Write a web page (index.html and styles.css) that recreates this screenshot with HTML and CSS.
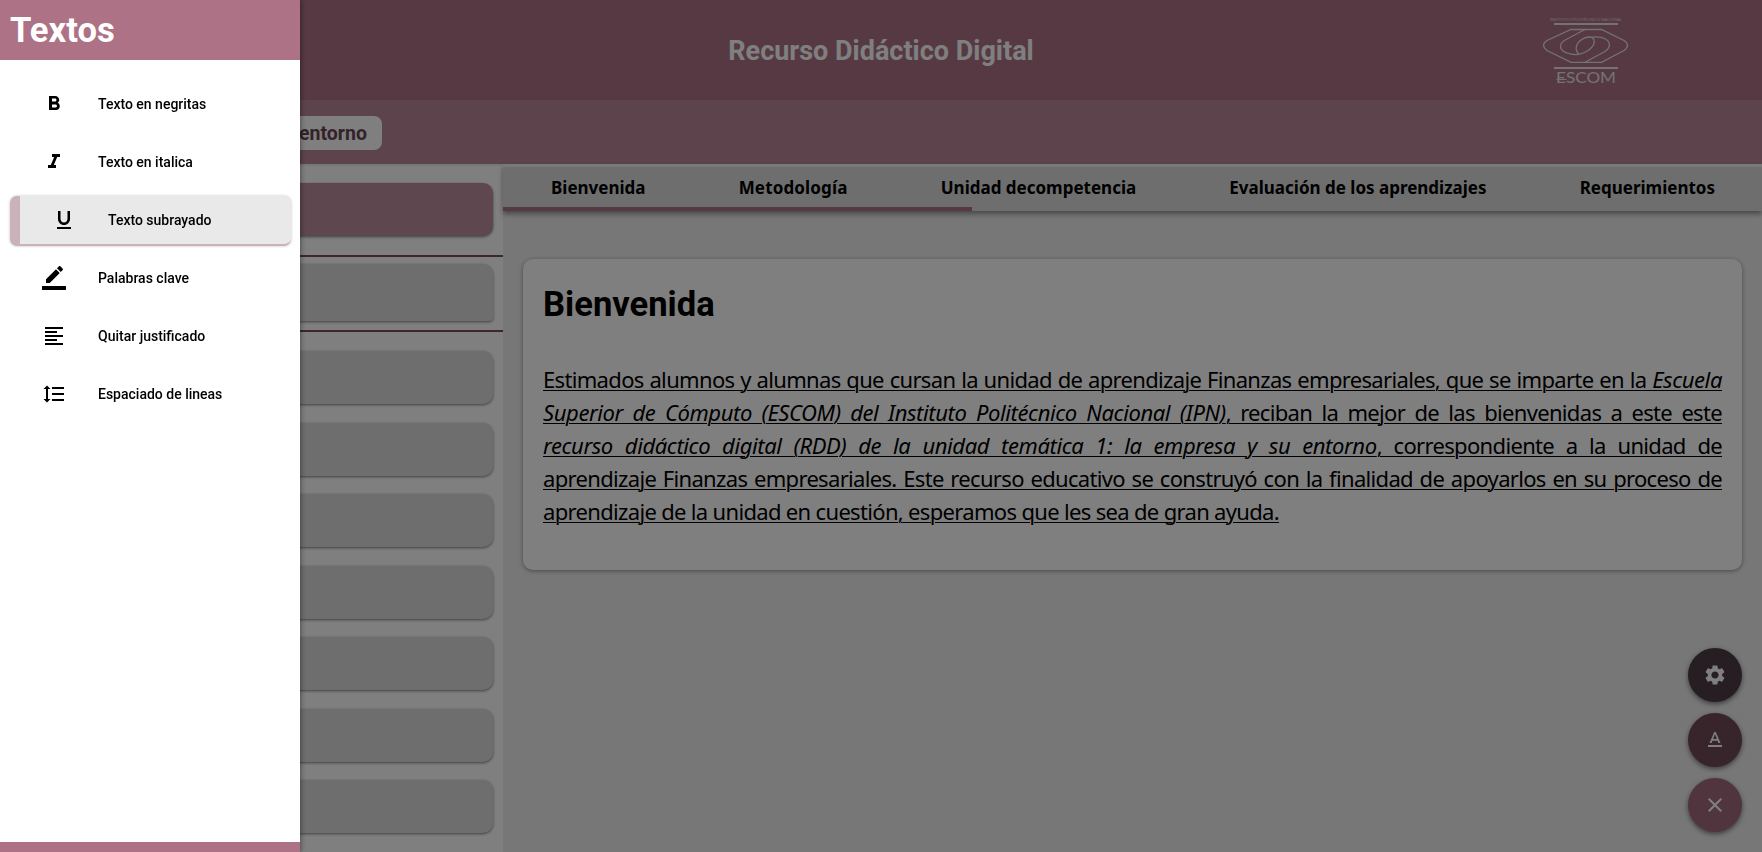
FILE: index.html
```html
<!DOCTYPE html>
<html lang="es">
<head>
<meta charset="utf-8">
<title>Recurso Didáctico Digital</title>
<link rel="stylesheet" href="styles.css">
</head>
<body>
<div class="page">
  <header class="header">
    <h1 class="header-title">Recurso Didáctico Digital</h1>
    <svg class="logo" width="90" height="70" viewBox="0 0 90 70" fill="none" stroke="#e6e6e6">
      <text class="logo-small" x="8" y="6" textLength="72" lengthAdjust="spacingAndGlyphs">INSTITUTO POLITÉCNICO NACIONAL</text>
      <path stroke-width="1.8" d="M12 9h64M12 53h64"/>
      <path stroke-width="1.3" d="M29 14.500H59.500L82 25.500Q89 30 82 35.500L59.500 47.300H29L5 35.500Q-2 30 5 25.500Z"/>
      <path stroke-width="1.300" d="M43 14.500L24 24.500C16 29 17 35 25 38C32 40.500 40 39.500 46 35.500C53 31 54 25 49.500 22.300C45 21 38 24.500 35.500 28.500C33.500 32 33.500 35.500 36.500 39"/>
      <path stroke-width="1.300" d="M43 47.300L62 37C69 33 69 27 63 23.800C59 21.500 54 21.500 48 22.300"/>
      <text class="logo-name" x="14" y="67.500" textLength="60" lengthAdjust="spacingAndGlyphs">ESCOM</text>
      <path d="M14.500 64.500h10"/>
    </svg>
  </header>
  <div class="subheader"><span class="pill">entorno</span></div>
  <div class="body">
    <aside class="sidebar">
      <div class="unit active"></div>
      <div class="group"><div class="unit tall"></div></div>
      <div class="units">
        <div class="unit"></div><div class="unit"></div><div class="unit"></div><div class="unit"></div>
        <div class="unit"></div><div class="unit"></div><div class="unit"></div>
      </div>
    </aside>
    <main class="main">
      <nav class="tabs">
        <a class="tab">Bienvenida</a><a class="tab wide">Metodología</a><a class="tab">Unidad decompetencia</a><a class="tab">Evaluación de los aprendizajes</a><a class="tab">Requerimientos</a>
        <span class="progress"></span>
      </nav>
      <section class="card">
        <h2 class="card-title">Bienvenida</h2>
        <p class="text">
          <span class="line">Estimados alumnos y alumnas que cursan la unidad de aprendizaje Finanzas empresariales, que se imparte en la <em>Escuela</em></span>
          <span class="line"><em>Superior de Cómputo (ESCOM) del Instituto Politécnico Nacional (IPN)</em>, reciban la mejor de las bienvenidas a este este</span>
          <span class="line"><em>recurso didáctico digital (RDD) de la unidad temática 1: la empresa y su entorno</em>, correspondiente a la unidad de</span>
          <span class="line">aprendizaje Finanzas empresariales. Este recurso educativo se construyó con la finalidad de apoyarlos en su proceso de</span>
          <span class="line last">aprendizaje de la unidad en cuestión, esperamos que les sea de gran ayuda.</span>
        </p>
      </section>
    </main>
  </div>
  <div class="fabs">
    <span class="fab dark"><svg class="icon" viewBox="0 0 24 24"><path d="M19.14 12.94c.04-.3.06-.61.06-.94 0-.32-.02-.64-.07-.94l2.03-1.58a.49.49 0 0 0 .12-.61l-1.92-3.32a.488.488 0 0 0-.59-.22l-2.39.96c-.5-.38-1.03-.7-1.62-.94l-.36-2.54a.484.484 0 0 0-.48-.41h-3.84c-.24 0-.43.17-.47.41l-.36 2.54c-.59.24-1.13.57-1.62.94l-2.39-.96c-.22-.08-.47 0-.59.22L2.74 8.87c-.12.21-.08.47.12.61l2.03 1.58c-.05.3-.09.63-.09.94s.02.64.07.94l-2.03 1.58a.49.49 0 0 0-.12.61l1.92 3.32c.12.22.37.29.59.22l2.39-.96c.5.38 1.03.7 1.62.94l.36 2.54c.05.24.24.41.48.41h3.84c.24 0 .44-.17.47-.41l.36-2.54c.59-.24 1.13-.56 1.62-.94l2.39.96c.22.08.47 0 .59-.22l1.92-3.32c.12-.22.07-.47-.12-.61l-2.01-1.58zM12 15.6c-1.98 0-3.6-1.62-3.6-3.6s1.62-3.6 3.6-3.6 3.6 1.62 3.6 3.6-1.62 3.6-3.6 3.6z"/></svg></span>
    <span class="fab mid"><svg class="icon" viewBox="0 0 24 24"><path d="M5 17v2h14v-2H5zm4.5-4.2h5l.9 2.2h2.1L12.75 4h-1.5L6.500 15h2.1l.9-2.2zM12 5.980L13.870 11h-3.740L12 5.980z"/></svg></span>
    <span class="fab light"><svg class="icon" viewBox="0 0 24 24"><path d="M19 6.410L17.590 5 12 10.590 6.410 5 5 6.410 10.590 12 5 17.590 6.410 19 12 13.410 17.590 19 19 17.590 13.410 12z"/></svg></span>
  </div>
</div>
<div class="backdrop"></div>
<aside class="drawer">
  <h2 class="drawer-title">Textos</h2>
  <ul class="menu">
    <li class="item"><svg class="icon" viewBox="0 0 24 24"><path d="M15.600 10.790c.97-.67 1.650-1.770 1.650-2.790 0-2.260-1.750-4-4-4H7v14h7.040c2.090 0 3.710-1.700 3.710-3.790 0-1.520-.86-2.820-2.150-3.420zM10 6.500h3c.83 0 1.500.67 1.500 1.500s-.67 1.500-1.500 1.500h-3v-3zm3.500 9H10v-3h3.500c.83 0 1.500.67 1.500 1.500s-.67 1.500-1.500 1.500z"/></svg>Texto en negritas</li>
    <li class="item"><svg class="icon" viewBox="0 0 24 24"><path d="M10 4v3h2.210l-3.420 8H6v3h8v-3h-2.210l3.420-8H18V4z"/></svg>Texto en italica</li>
    <li class="item selected"><svg class="icon" viewBox="0 0 24 24"><path d="M12 17c3.310 0 6-2.690 6-6V3h-2.500v8c0 1.930-1.570 3.500-3.500 3.500S8.500 12.930 8.500 11V3H6v8c0 3.310 2.690 6 6 6zm-7 2v2h14v-2H5z"/></svg>Texto subrayado</li>
    <li class="item"><svg class="icon" viewBox="0 0 24 24"><path d="M17.750 7L14 3.250l-10 10V17h3.750l10-10zm2.960-2.960a1 1 0 0 0 0-1.410L18.370.29a1 1 0 0 0-1.410 0L15 2.250 18.750 6l1.960-1.960zM0 20h24v4H0z"/></svg>Palabras clave</li>
    <li class="item"><svg class="icon" viewBox="0 0 24 24"><path d="M15 15H3v2h12v-2zm0-8H3v2h12V7zM3 13h18v-2H3v2zm0 8h18v-2H3v2zM3 3v2h18V3H3z"/></svg>Quitar justificado</li>
    <li class="item"><svg class="icon" viewBox="0 0 24 24"><path d="M6 7h2.500L5 3.500 1.500 7H4v10H1.500L5 20.500 8.500 17H6V7zm4-2v2h12V5H10zm0 14h12v-2H10v2zm0-6h12v-2H10v2z"/></svg>Espaciado de lineas</li>
  </ul>
  <div class="drawer-foot"></div>
</aside>
</body>
</html>
```
FILE: styles.css
```css
* { box-sizing: border-box; }
body { margin: 0; font-family: Roboto, sans-serif; color: #000; overflow: hidden; }
h1, h2, p, ul { margin: 0; padding: 0; }
.page { height: 852px; display: flex; flex-direction: column; background: #fff; overflow: hidden; }
.header { height: 100px; flex: none; background: #ad7285; display: grid; grid-template-columns: 1fr auto 1fr; align-items: center; }
.header-title { grid-column: 2; color: #fff; font-size: 27px; font-weight: 700; white-space: nowrap; padding-top: 1px; }
.logo { justify-self: end; margin-right: 130px; }
.logo-small { font: 4px "Liberation Sans", sans-serif; fill: #fff; stroke: none; opacity: .7; }
.logo-name { font: 400 14.500px Lato, sans-serif; fill: #e6e6e6; stroke: none; }
.subheader { height: 64px; flex: none; background: #ba8898; padding: 16px 0 0 284px; }
.pill { display: inline-block; height: 34px; padding: 0 15px; line-height: 35px; border-radius: 8px; background: #fff; color: #6a4552; font-size: 19.500px; font-weight: 700; }
.body { display: flex; flex: 1; min-height: 0; }
.sidebar { width: 503px; flex: none; padding-top: 19px; background: #fff; border-top: 2px solid #eee; }
.unit { height: 53px; margin: 0 10px; border-radius: 10px; background: #dcdcdc; box-shadow: 0 1px 3px rgba(0,0,0,.5); }
.unit.active { background: #bd8e9c; margin-top: -2px; }
.group { margin-top: 19px; padding: 7px 0 9px; border-top: 2px solid #7e4b5c; border-bottom: 2px solid #7e4b5c; }
.unit.tall { height: 57px; border-radius: 10px 10px 4px 4px; }
.units { padding-top: 19px; display: flex; flex-direction: column; gap: 18.500px; }
.units .unit { flex: none; }
.main { flex: 1; min-width: 0; background: #eee; }
.tabs { height: 47px; position: relative; border-top: 3px solid #f2f2f2; background: #dcdcdc; display: flex; justify-content: space-between; padding: 0 47px 0 48px; box-shadow: 0 3px 5px rgba(0,0,0,.4); }
.tab { font: 700 17px/41px "Noto Sans", "Open Sans", sans-serif; white-space: nowrap; }
.tab.wide { letter-spacing: .15px; }
.progress { position: absolute; left: 0; bottom: 0; width: 469px; height: 4px; background: #ad7285; }
.card { margin: 48px 20px 0; height: 311px; padding: 24px 20px; border-radius: 10px; background: #fff; box-shadow: 0 1px 4px rgba(0,0,0,.4); }
.card-title { font-size: 34.600px; line-height: 43px; font-weight: 700; }
.text { margin-top: 37px; font: 22px/33px "Noto Sans", "Open Sans", sans-serif; }
.line { display: block; white-space: nowrap; text-align: justify; text-align-last: justify; text-decoration: underline; text-decoration-thickness: 1px; text-underline-offset: 2px; letter-spacing: -.67px; }
.line em { letter-spacing: -.4px; }
.line.last { text-align-last: left; }
.fabs { position: absolute; right: 20px; top: 648px; display: flex; flex-direction: column; gap: 11px; }
.fab { width: 54px; height: 54px; border-radius: 50%; display: grid; place-items: center; box-shadow: 0 2px 5px rgba(0,0,0,.5); }
.icon { width: 24px; height: 24px; flex: none; }
.fab .icon { fill: #fff; }
.dark { background: #4c3d44; }
.mid { background: #704a58; }
.light { background: #a06b7c; }
.backdrop { position: fixed; inset: 0; background: rgba(0,0,0,.5); }
.drawer { position: fixed; left: 0; top: 0; width: 300px; height: 852px; display: flex; flex-direction: column; background: #fff; box-shadow: 1px 0 5px rgba(0,0,0,.4); }
.drawer-title { height: 60px; padding-left: 10px; background: #ad7285; color: #fff; font-size: 34.600px; line-height: 61px; font-weight: 700; }
.menu { list-style: none; flex: 1; padding: 20px 9px 0 10px; display: flex; flex-direction: column; gap: 8px; }
.item { height: 50px; padding: 0 0 2px 32px; display: flex; align-items: center; gap: 32px; font-size: 14px; font-weight: 500; border-radius: 7px; }
.selected { background: #e9e9e9; border-left: 10px solid #c9b2ba; border-bottom: 2px solid #c9b2ba; padding-bottom: 0; box-shadow: 0 0 3px rgba(0,0,0,.25); }
.drawer-foot { height: 10px; background: #ad7285; }
```
